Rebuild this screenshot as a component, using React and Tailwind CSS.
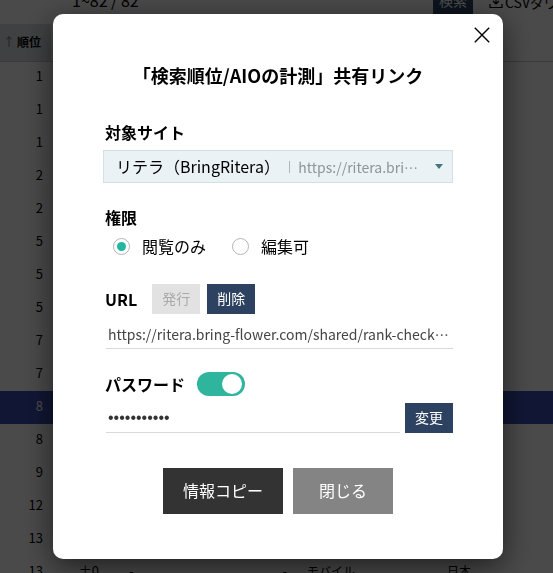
import { useState } from 'react';

const ROWS = [
  { rank: 1 }, { rank: 1 }, { rank: 1 }, { rank: 2 }, { rank: 2 },
  { rank: 5 }, { rank: 5 }, { rank: 5 }, { rank: 7 }, { rank: 7 },
  { rank: 8, selected: true }, { rank: 8 }, { rank: 9 }, { rank: 12 }, { rank: 13 },
  { rank: 13, diff: '±0', prev: '-', best: '-', device: 'モバイル', area: '日本' },
];

function DownloadIcon() {
  return (
    <svg viewBox="0 0 14 14" className="h-3.5 w-3.5" fill="none" stroke="currentColor" strokeWidth="1.2">
      <path d="M7 0.5v8M4 6l3 3 3-3M1 9v3.5h12V9" />
    </svg>
  );
}

function RankTable() {
  return (
    <div className="h-screen overflow-hidden bg-[#f8f8f8] text-black" aria-hidden="true">
      {/* Toolbar, scrolled partly out of view */}
      <div className="-mt-4 flex h-10 items-center pb-1 pl-[72px] whitespace-nowrap">
        <span className="w-[361px] shrink-0 pb-1 text-base">1~82 / 82</span>
        <button tabIndex={-1} className="mb-1 h-7 w-10 shrink-0 bg-[#2c4260] text-sm text-white">検索</button>
        <button tabIndex={-1} className="ml-4 flex shrink-0 items-center gap-0.5 text-sm">
          <DownloadIcon />CSVダウンロード
        </button>
      </div>
      <table className="w-full table-fixed border-collapse text-[13px]">
        <colgroup>
          <col className="w-[51px]" />
          <col className="w-[50px]" />
          <col className="w-[80px]" />
          <col className="w-[110px]" />
          <col className="w-[140px]" />
          <col />
        </colgroup>
        <thead>
          <tr className="h-[37px] border-b border-[#c0c4c6]">
            <th className="bg-[#d5dadc] pr-2.5 text-right text-xs font-bold whitespace-nowrap">
              <span className="mr-0.5 font-normal text-gray-500">↑</span>順位
            </th>
            <th colSpan={5} />
          </tr>
        </thead>
        <tbody>
          {ROWS.map((r, i) => (
            <tr key={i} className={r.selected ? 'h-[33px] bg-[#3a4cb0] text-white' : 'h-[33px]'}>
              <td className="pr-2 pb-1 text-right">{r.rank}</td>
              <td className="pr-0.5 pb-1 text-right">{r.diff}</td>
              <td className="pb-1 pl-7">{r.prev}</td>
              <td className="pr-1 pb-1 text-right">{r.best}</td>
              <td className="pb-1 pl-4 text-xs">{r.device}</td>
              <td className="pb-1 pl-4 text-xs">{r.area}</td>
            </tr>
          ))}
        </tbody>
      </table>
    </div>
  );
}

function Radio({ label, ...props }) {
  return (
    <label className="flex items-center gap-3 text-base leading-6">
      <input
        type="radio"
        name="permission"
        className="h-[17px] w-[17px] appearance-none rounded-full border border-[#b4b4b4] bg-white checked:bg-[#22b8a0] checked:bg-clip-content checked:p-[3px]"
        {...props}
      />
      {label}
    </label>
  );
}

function SmallButton({ children, ...props }) {
  return (
    <button
      className="h-[30px] w-12 shrink-0 bg-[#2c4260] pb-0.5 text-sm text-white disabled:bg-[#e2e2e2] disabled:text-[#a9a9a9]"
      {...props}
    >
      {children}
    </button>
  );
}

function ShareDialog() {
  const [permission, setPermission] = useState('view');
  const [usePassword, setUsePassword] = useState(true);

  return (
    <div
      role="dialog"
      aria-labelledby="share-title"
      className="relative w-[450px] max-w-full rounded-[10px] bg-white px-[50px] pt-[49px] pb-[45px] text-black shadow-[0_8px_30px_rgba(0,0,0,0.6)]"
    >
      <button aria-label="閉じる" className="absolute top-3 right-3 p-px">
        <svg viewBox="0 0 16 16" className="h-4 w-4" stroke="black" strokeWidth="1.4">
          <path d="M0.8 0.8l14.4 14.4M15.2 0.8L0.8 15.2" />
        </svg>
      </button>

      <h2 id="share-title" className="text-center text-lg leading-6 font-bold">「検索順位/AIOの計測」共有リンク</h2>

      {/* Target site */}
      <div className="mt-[33px]">
        <label htmlFor="site" className="block pl-0.5 text-base leading-6 font-bold">対象サイト</label>
        <div className="mt-1.5 grid items-center border border-[#d3dfe4] bg-[#eaf2f5]">
          <select id="site" className="col-start-1 row-start-1 h-[31px] w-full appearance-none bg-transparent pb-0.5 pl-3 text-base">
            <option>リテラ（BringRitera）</option>
          </select>
          <div className="pointer-events-none col-start-1 row-start-1 flex items-center justify-end pr-2 text-sm text-[#8f9496]">
            <span className="mr-2 h-3 w-px bg-[#b0b6b8]" />
            https://ritera.bri…
            <svg viewBox="0 0 10 5" className="ml-4 h-[5px] w-2.5" fill="#44767e">
              <path d="M1 0h8L5 5z" />
            </svg>
          </div>
        </div>
      </div>

      {/* Permission */}
      <fieldset className="mt-[22px]">
        <legend className="pl-0.5 text-base leading-6 font-bold">権限</legend>
        <div className="mt-[5px] flex gap-[26px] pl-2.5">
          <Radio label="閲覧のみ" checked={permission === 'view'} onChange={() => setPermission('view')} />
          <Radio label="編集可" checked={permission === 'edit'} onChange={() => setPermission('edit')} />
        </div>
      </fieldset>

      {/* URL */}
      <div className="mt-[26px] flex items-center">
        <label htmlFor="url" className="pr-[15px] pl-0.5 text-base font-bold">URL</label>
        <SmallButton disabled>発行</SmallButton>
        <div className="w-[7px]" />
        <SmallButton>削除</SmallButton>
      </div>
      <div className="pl-[3px]">
        <input
          id="url"
          readOnly
          value="https://ritera.bring-flower.com/shared/rank-check…"
          className="mt-[5px] block h-[30px] w-full border-b border-[#d9d9d9] px-0.5 text-sm text-[#444]"
        />
      </div>

      {/* Password */}
      <div className="mt-[23px] flex items-center gap-3 pl-0.5">
        <label htmlFor="password" className="text-base leading-6 font-bold">パスワード</label>
        <input
          type="checkbox"
          role="switch"
          aria-label="パスワードを使う"
          checked={usePassword}
          onChange={(e) => setUsePassword(e.target.checked)}
          className="flex h-6 w-12 appearance-none items-center rounded-full bg-gray-300 px-[3px] before:block before:h-5 before:w-5 before:rounded-full before:bg-white checked:justify-end checked:bg-[#2fb59d]"
        />
      </div>
      <div className="mt-[7px] flex gap-[5px] pl-[3px]">
        <input
          id="password"
          type="password"
          defaultValue="ritera-2024"
          className="h-[30px] min-w-0 flex-1 border-b border-[#d9d9d9] px-0.5 font-['Liberation_Sans',sans-serif] text-base text-[#333]"
        />
        <SmallButton>変更</SmallButton>
      </div>

      <div className="mt-[35px] flex justify-center gap-2.5">
        <button className="h-[46px] w-[120px] bg-[#333] pb-0.5 text-base text-white">情報コピー</button>
        <button className="h-[46px] w-[100px] bg-[#848484] pb-0.5 text-base text-white">閉じる</button>
      </div>
    </div>
  );
}

export default function App() {
  return (
    <div lang="ja" className="font-['Noto_Sans_CJK_JP',sans-serif]">
      <RankTable />
      <div className="fixed inset-0 flex items-center justify-center bg-black/70 pl-[3px]">
        <ShareDialog />
      </div>
    </div>
  );
}
